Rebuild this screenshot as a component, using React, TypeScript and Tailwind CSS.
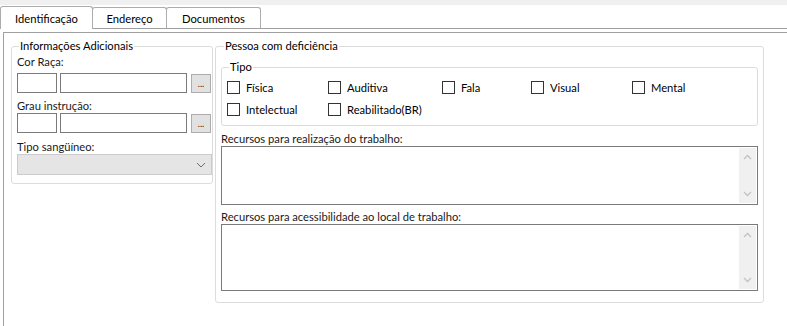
import React from "react";

const font = { fontFamily: 'Lato, "Liberation Sans", sans-serif' };

function Chevron({ up = false }: { up?: boolean }) {
  return (
    <svg width="9" height="6" viewBox="0 0 9 6" className="block">
      <path
        d={up ? "M1 5 L4.5 1.5 L8 5" : "M1 1 L4.5 4.5 L8 1"}
        fill="none"
        stroke="#c2c2c2"
        strokeWidth="1.3"
      />
    </svg>
  );
}

function Check({ label, w }: { label: string; w?: string }) {
  return (
    <div className={`flex items-center h-[13px] ${w ?? ""}`}>
      <div className="w-[13px] h-[13px] border border-[#333333] bg-white shrink-0" />
      <span className="ml-[6px] leading-[14px] whitespace-nowrap">{label}</span>
    </div>
  );
}

function TextArea({ h }: { h: string }) {
  return (
    <div className={`${h} border border-[#7a7a7a] bg-white flex justify-end p-px`}>
      <div className="w-[17px] h-full bg-[#f0f0f0] flex flex-col items-center justify-between py-[6px]">
        <Chevron up />
        <Chevron />
      </div>
    </div>
  );
}

function DotsButton() {
  return (
    <div className="ml-[4px] mt-px w-[20px] h-[19px] border border-[#adadad] bg-[#e1e1e1] flex items-end justify-center pb-[4px] text-[9px] leading-[9px] text-[#222222]">
      ...
    </div>
  );
}

export default function App() {
  return (
    <div
      className="w-[787px] h-[326px] bg-white overflow-hidden text-[11.2px] text-[#000000]"
      style={font}
    >
      <div className="h-[5px] bg-[#f0f0f0]" />
      {/* Tab strip */}
      <div className="flex items-end h-[24px] border-b border-[#a0a0a0]">
        <div className="-mb-px h-[23px] w-[93px] bg-white border-x border-t border-[#acacac] rounded-t-[3px] flex justify-center pt-[5px] leading-[14px]">
          Identificação
        </div>
        <div className="-ml-px h-[21px] w-[75px] bg-white border-x border-t border-[#acacac] rounded-t-[3px] flex justify-center pt-[4px] leading-[14px]">
          Endereço
        </div>
        <div className="-ml-px h-[21px] w-[95px] bg-white border-x border-t border-[#acacac] rounded-t-[3px] flex justify-center pt-[4px] leading-[14px]">
          Documentos
        </div>
      </div>
      {/* Panel */}
      <div className="mt-[3px] ml-[3px] h-[400px] border-l border-t border-[#a0a0a0] flex items-start pt-[6px] pl-[7px]">
        {/* Informações Adicionais */}
        <fieldset className="w-[202px] min-w-0 h-[145px] border border-[#dcdcdc] rounded-[3px] pl-[5px] pr-0 pt-[2px]">
          <legend className="ml-[2px] px-px leading-[14px]">Informações Adicionais</legend>
          <div className="leading-[14px] text-[#1a1a1a]">Cor Raça:</div>
          <div className="flex items-start mt-[4px]">
            <div className="w-[40px] h-[20px] border border-[#7a7a7a] bg-white" />
            <div className="ml-[3px] w-[127px] h-[20px] border border-[#7a7a7a] bg-white" />
            <DotsButton />
          </div>
          <div className="leading-[14px] mt-[6px] text-[#1a1a1a]">Grau instrução:</div>
          <div className="flex items-start">
            <div className="w-[40px] h-[20px] border border-[#7a7a7a] bg-white" />
            <div className="ml-[3px] w-[127px] h-[20px] border border-[#7a7a7a] bg-white" />
            <DotsButton />
          </div>
          <div className="leading-[14px] mt-[7px] text-[#1a1a1a]">Tipo sangüíneo:</div>
          <div className="w-[195px] h-[21px] border border-[#cccccc] bg-[#e5e5e5] flex items-center justify-end pr-[5px]">
            <svg width="10" height="6" viewBox="0 0 10 6">
              <path d="M1 1 L5 5 L9 1" fill="none" stroke="#6d6d6d" strokeWidth="1" />
            </svg>
          </div>
        </fieldset>
        {/* Pessoa com deficiência */}
        <fieldset className="ml-[2px] w-[549px] min-w-0 h-[264px] border border-[#dcdcdc] rounded-[3px] px-[5px] pt-[7px]">
          <legend className="ml-[3px] px-px leading-[14px]">Pessoa com deficiência</legend>
          <fieldset className="h-[66px] min-w-0 border border-[#dcdcdc] rounded-[3px] pl-[5px] pt-[7px]">
            <legend className="ml-[2px] px-px leading-[14px]">Tipo</legend>
            <div className="flex">
              <Check label="Física" w="w-[101px]" />
              <Check label="Auditiva" w="w-[114px]" />
              <Check label="Fala" w="w-[89px]" />
              <Check label="Visual" w="w-[101px]" />
              <Check label="Mental" />
            </div>
            <div className="flex mt-[9px]">
              <Check label="Intelectual" w="w-[101px]" />
              <Check label="Reabilitado(BR)" />
            </div>
          </fieldset>
          <div className="leading-[14px] mt-[6px] text-[#1a1a1a]">Recursos para realização do trabalho:</div>
          <TextArea h="h-[59px]" />
          <div className="leading-[14px] mt-[5px] text-[#1a1a1a]">Recursos para acessibilidade ao local de trabalho:</div>
          <TextArea h="h-[67px]" />
        </fieldset>
      </div>
    </div>
  );
}
